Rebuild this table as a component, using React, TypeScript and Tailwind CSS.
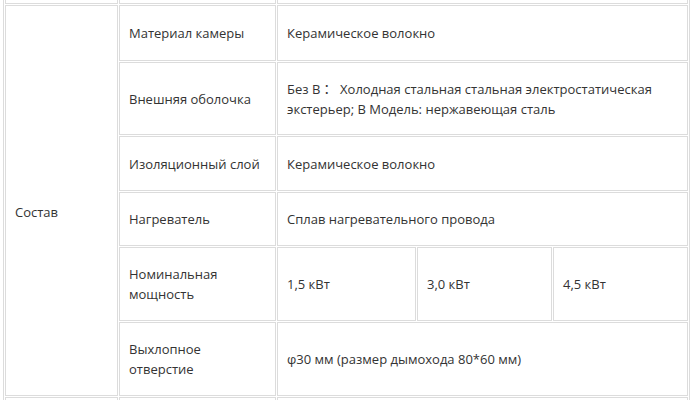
import React from 'react'

// spec table, scrolled so only the "Состав" block shows fully
const cell = 'border border-[#dcdcdc] bg-white flex items-center pl-[9px] pr-2'

const rows: { label: React.ReactNode; value: React.ReactNode; row: string }[] = [
    { label: 'Материал камеры', value: 'Керамическое волокно', row: 'row-start-2' },
    {
        label: 'Внешняя оболочка',
        value: (
            <>
                Без В：&nbsp;&nbsp;Холодная стальная стальная электростатическая
                <br />
                экстерьер; В Модель: нержавеющая сталь
            </>
        ),
        row: 'row-start-3',
    },
    { label: 'Изоляционный слой', value: 'Керамическое волокно', row: 'row-start-4' },
    { label: 'Нагреватель', value: 'Сплав нагревательного провода', row: 'row-start-5' },
]

export default function App() {
    return (
        <div
            className="h-[400px] w-[690px] overflow-hidden bg-white text-[13px] leading-[20px] text-[#333]"
            style={{ fontFamily: '"Open Sans", "Noto Sans CJK JP", sans-serif' }}
        >
            <div className="ml-[3px] mt-[-52px] w-[687px] border border-[#dcdcdc] p-[1px]">
                <div className="grid grid-cols-[113px_157px_139px_135px_135px] grid-rows-[54px_56px_73px_55px_54px_74px_74px_54px] gap-[1px]">
                    {/* row above, mostly scrolled away */}
                    <div className={`${cell} row-start-1 col-start-1`} />
                    <div className={`${cell} row-start-1 col-start-2`} />
                    <div className={`${cell} row-start-1 col-start-3 col-span-3`} />

                    <div className={`${cell} col-start-1 row-start-2 row-span-6 pt-[22px]`}>Состав</div>

                    {rows.map(r => (
                        <React.Fragment key={r.row}>
                            <div className={`${cell} col-start-2 ${r.row}`}>{r.label}</div>
                            <div className={`${cell} col-start-3 col-span-3 ${r.row}`}>{r.value}</div>
                        </React.Fragment>
                    ))}

                    <div className={`${cell} col-start-2 row-start-6`}>
                        Номинальная
                        <br />
                        мощность
                    </div>
                    <div className={`${cell} col-start-3 row-start-6`}>1,5 кВт</div>
                    <div className={`${cell} col-start-4 row-start-6`}>3,0 кВт</div>
                    <div className={`${cell} col-start-5 row-start-6`}>4,5 кВт</div>

                    <div className={`${cell} col-start-2 row-start-7`}>
                        Выхлопное
                        <br />
                        отверстие
                    </div>
                    <div className={`${cell} col-start-3 col-span-3 row-start-7`}>φ30 мм (размер дымохода 80*60 мм)</div>

                    {/* next row, cut off at the bottom */}
                    <div className={`${cell} row-start-8 col-start-1`} />
                    <div className={`${cell} row-start-8 col-start-2`} />
                    <div className={`${cell} row-start-8 col-start-3 col-span-3`} />
                </div>
            </div>
        </div>
    )
}
